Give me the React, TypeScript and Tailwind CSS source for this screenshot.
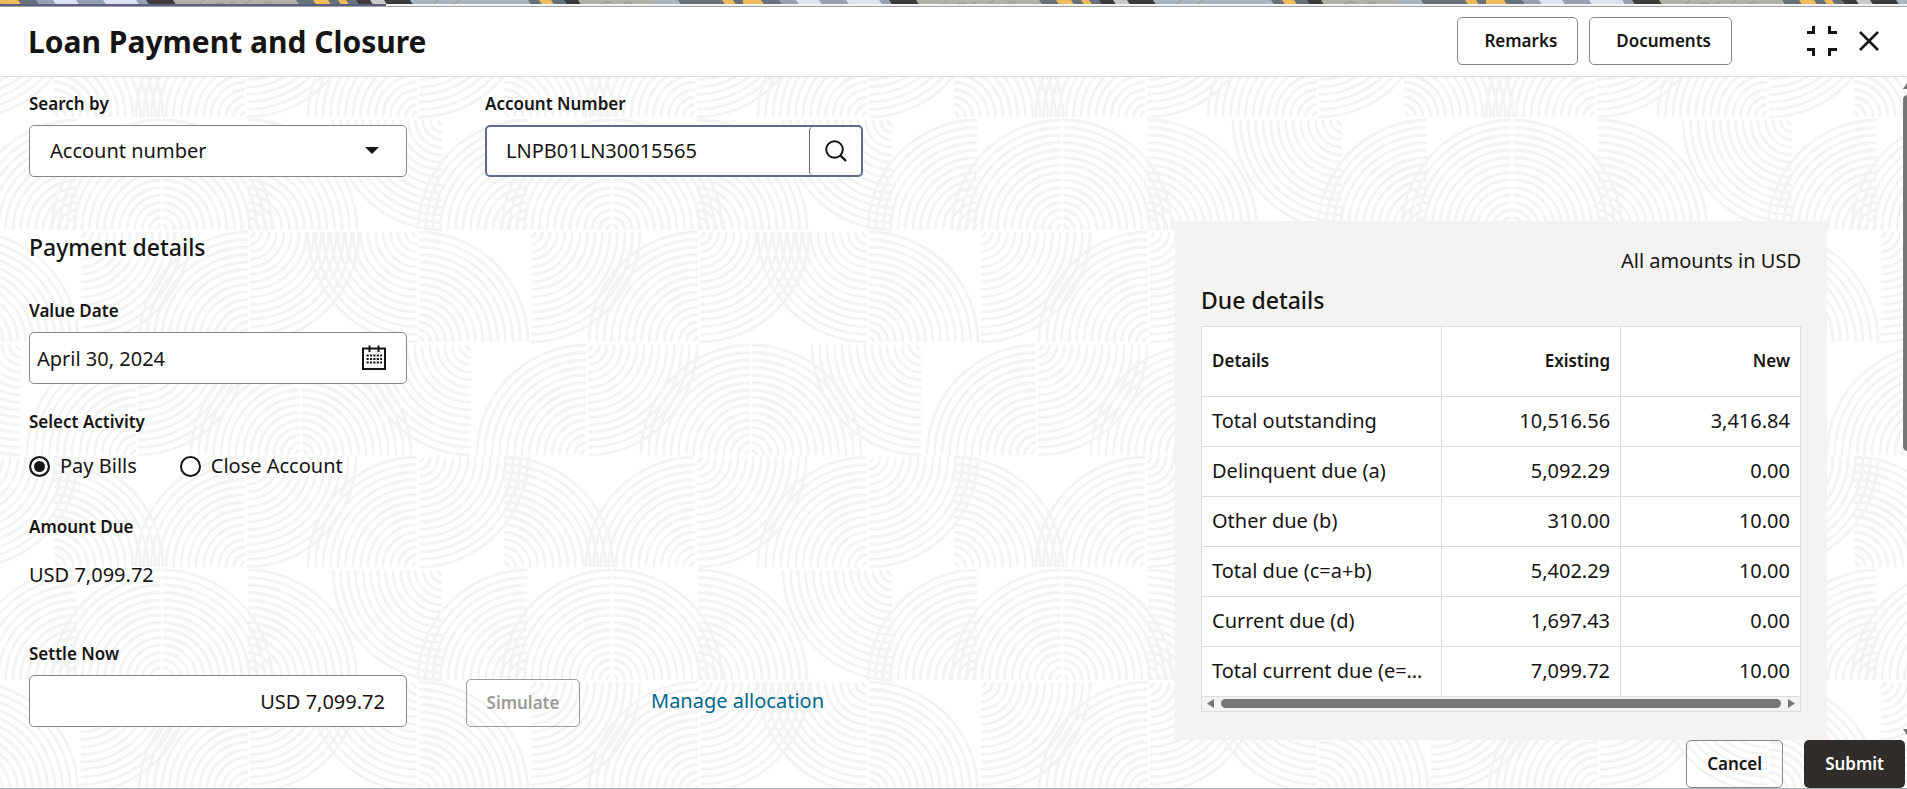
import { useState } from "react";
import clsx from "clsx";

const BAND_COLORS: [number, string][] = [
  [0, "#f0bb5b"], [20, "#66717a"], [38, "#98a1b4"], [55, "#dbe4f0"], [78, "#98a1b4"],
  [105, "#dbe4f0"], [138, "#98a1b4"], [148, "#3f3b3a"], [175, "#b3b0aa"], [298, "#66717a"],
  [315, "#f0bb5b"], [330, "#66717a"], [340, "#f0bb5b"], [348, "#66717a"], [358, "#3f3b3a"],
  [372, "#c9c9c9"], [386, "#3f3b3a"], [412, "#a9b5bf"], [530, "#66717a"], [541, "#f0bb5b"],
  [553, "#66717a"], [566, "#3f3b3a"], [580, "#b3b0aa"], [655, "#a9b5bf"], [680, "#66717a"],
  [724, "#f0bb5b"], [735, "#66717a"],
];

// Quarter discs of the backdrop tile: centre x, row, quadrant
type Quadrant = "LU" | "RU" | "LD" | "RD";
const ARCS: [number, number, Quadrant][] = [
  [418, 0, "LU"], [418, 0, "RD"], [503, 0, "RU"], [696, 0, "LU"], [696, 0, "RD"],
  [443, 1, "LD"], [528, 1, "LU"], [612, 1, "LU"], [612, 1, "RU"], [697, 1, "RU"],
  [418, 2, "LD"], [418, 2, "RU"], [530, 2, "RD"], [699, 2, "LU"], [699, 2, "RD"],
  [301, 3, "LU"], [301, 3, "RU"], [472, 3, "LD"], [587, 3, "LU"], [587, 3, "RD"],
];
const ROW_TOPS = [1, 114, 226, 339];
const RINGS = Array.from({ length: 15 }, (_, i) => 5 + i * 7.5);

function arcPath(cx: number, row: number, q: Quadrant) {
  const up = q[1] === "U";
  const sx = q[0] === "R" ? 1 : -1;
  const cy = ROW_TOPS[row] + (up ? 110 : 0);
  const sweep = (sx === 1) === up ? 0 : 1;
  return RINGS.map(
    (r) => `M${cx + sx * r} ${cy}A${r} ${r} 0 0 ${sweep} ${cx + sx} ${cy + (up ? -r : r)}`
  ).join("");
}

function Backdrop() {
  return (
    <svg className="absolute inset-0 -z-10 h-full w-full" aria-hidden="true">
      <defs>
        <pattern id="waves" x="0" y="6" width="450" height="450" patternUnits="userSpaceOnUse">
          <g fill="none" stroke="#f3f3f3" strokeWidth="2.8">
            {ARCS.map(([cx, row, q], i) => (
              <g key={i}>
                <path d={arcPath(cx, row, q)} />
                <path d={arcPath(cx - 450, row, q)} />
              </g>
            ))}
          </g>
        </pattern>
      </defs>
      <rect width="100%" height="100%" fill="url(#waves)" />
    </svg>
  );
}

function TopBand() {
  return (
    <svg className="block h-[6px] w-full shrink-0" aria-hidden="true">
      <defs>
        <pattern id="band" width="743" height="6" patternUnits="userSpaceOnUse">
          <rect width="743" height="6" fill="#66717a" />
          {BAND_COLORS.map(([x, fill], i) => {
            const end = i + 1 < BAND_COLORS.length ? BAND_COLORS[i + 1][0] : 743;
            return <path key={x} d={`M${x - 2} 0H${end + 1}L${end + 5} 6H${x + 2}Z`} fill={fill} />;
          })}
          <g stroke="#98958f" fill="none">
            <path d="M198 6l6-6M212 6q6-5 12-2M228 6q2-4 6-4M244 5l7-5M262 5q6-5 10-2M432 6l6-6M452 6l8-6M600 5q6-5 12-2M622 5q6-5 10-1" />
          </g>
        </pattern>
      </defs>
      <rect width="100%" height="4" fill="url(#band)" />
      <rect y="4" width="100%" height="2" fill="#f4f4f4" />
      <rect y="4" width="386" height="2" fill="#5b5f86" />
    </svg>
  );
}

const OUTLINE_BUTTON = "h-12 rounded-[5px] border border-[#8a8886] text-[17px] font-semibold";
const FIELD = "h-[52px] w-full rounded-[5px] border border-[#8a8886] bg-white text-xl";
const LABEL = "text-[17px] leading-6 font-semibold";

function Header() {
  return (
    <header className="flex h-[71px] shrink-0 items-center border-t border-b border-t-[#a0a0a0] border-b-[#dedddb] bg-white pr-7 pl-7">
      <h1 className="text-[30px] leading-10 font-bold">Loan Payment and Closure</h1>
      <div className="ml-auto flex items-center gap-[11px] pb-[2px]">
        <button type="button" className={clsx(OUTLINE_BUTTON, "pr-5 pl-[26px]")}>Remarks</button>
        <button type="button" className={clsx(OUTLINE_BUTTON, "pr-5 pl-[26px]")}>Documents</button>
      </div>
      <button type="button" aria-label="Collapse" className="ml-[74px] pb-[2px]">
        <svg width="32" height="32" viewBox="0 0 32 32" fill="none" stroke="#161513" strokeWidth="3">
          <path d="M1 7.500H7.500V1M23.500 1V7.500H31M1 24.500H7.500V31M31 24.500H23.500V31" />
        </svg>
      </button>
      <button type="button" aria-label="Close" className="ml-[21px] pb-[2px]">
        <svg width="20" height="20" viewBox="0 0 20 20" fill="none" stroke="#161513" strokeWidth="2.500">
          <path d="M1 1L19 19M19 1L1 19" />
        </svg>
      </button>
    </header>
  );
}

function CalendarIcon() {
  return (
    <svg width="24" height="26" viewBox="0 0 24 26" fill="none" stroke="#161513" strokeWidth="2">
      <path d="M1 3.500H23V24H1ZM7.500 0.500V7M16.500 0.500V7" />
      <path d="M4.500 10.500H20M4.500 14H20M4.500 17.500H20" strokeWidth="2.200" strokeDasharray="2.200 1.200" />
    </svg>
  );
}

function SearchBar() {
  return (
    <div className="flex gap-[78px]">
      <div className="w-[378px]">
        <label htmlFor="search-by" className={clsx(LABEL, "block")}>Search by</label>
        <div className="relative mt-[9px]">
          <select id="search-by" className={clsx(FIELD, "appearance-none px-5")}>
            <option>Account number</option>
            <option>Customer ID</option>
          </select>
          <svg className="pointer-events-none absolute top-[22px] right-7" width="14" height="7" viewBox="0 0 14 7" aria-hidden="true">
            <path d="M0 0H14L7 7Z" fill="#161513" />
          </svg>
        </div>
      </div>
      <div className="w-[378px]">
        <label htmlFor="account-number" className={clsx(LABEL, "block")}>Account Number</label>
        <div className="mt-[9px] flex h-[52px] rounded-[5px] border-2 border-[#5f6b8f] bg-white">
          <input
            id="account-number"
            defaultValue="LNPB01LN30015565"
            className="min-w-0 flex-1 rounded-l pl-[19px] text-xl outline-none"
          />
          <button type="button" aria-label="Search account" className="flex w-[52px] items-center justify-center rounded border-l border-[#6b6967]">
            <svg width="22" height="22" viewBox="0 0 22 22" fill="none" stroke="#161513" strokeWidth="2">
              <circle cx="9.500" cy="9.500" r="8.300" />
              <path d="M15.300 15.300L21 21" strokeWidth="2.400" />
            </svg>
          </button>
        </div>
      </div>
    </div>
  );
}

function Radio({ label, checked, onChange }: { label: string; checked: boolean; onChange: () => void }) {
  return (
    <label className="flex items-center gap-[10px] text-xl leading-7">
      <input
        type="radio"
        name="activity"
        checked={checked}
        onChange={onChange}
        className="size-[21px] appearance-none rounded-full border-2 border-[#161513] bg-white checked:bg-[#161513] checked:shadow-[inset_0_0_0_3px_white]"
      />
      {label}
    </label>
  );
}

function PaymentForm() {
  const [activity, setActivity] = useState("pay");

  return (
    <section>
      <h2 className="text-[23px] leading-8 font-medium">Payment details</h2>

      <div className="mt-9 w-[378px]">
        <label htmlFor="value-date" className={clsx(LABEL, "block")}>Value Date</label>
        <div className="relative mt-[9px]">
          <input id="value-date" defaultValue="April 30, 2024" className={clsx(FIELD, "px-[7px]")} />
          <button type="button" aria-label="Open calendar" className="absolute top-[13px] right-[21px]">
            <CalendarIcon />
          </button>
        </div>
      </div>

      <fieldset className="mt-[26px]">
        <legend className={LABEL}>Select Activity</legend>
        <div className="mt-[18px] flex gap-[43px]">
          <Radio label="Pay Bills" checked={activity === "pay"} onChange={() => setActivity("pay")} />
          <Radio label="Close Account" checked={activity === "close"} onChange={() => setActivity("close")} />
        </div>
      </fieldset>

      <p className={clsx(LABEL, "mt-[35px]")}>Amount Due</p>
      <p className="mt-[22px] text-xl leading-7">USD 7,099.72</p>

      <label htmlFor="settle-now" className={clsx(LABEL, "mt-[53px] block")}>Settle Now</label>
      <div className="mt-[9px] flex items-end">
        <div className="w-[378px]">
          <input id="settle-now" defaultValue="USD 7,099.72" className={clsx(FIELD, "px-[21px] text-right")} />
        </div>
        <button type="button" disabled className="ml-[59px] h-12 w-[114px] rounded-[5px] border border-[#9d9b99] text-[17px] font-semibold text-[#9d9b99]">
          Simulate
        </button>
        <a href="#allocation" className="mb-[12px] ml-[71px] text-xl leading-7 text-[#00688c]">Manage allocation</a>
      </div>
    </section>
  );
}

const ROWS = [
  ["Total outstanding", "10,516.56", "3,416.84"],
  ["Delinquent due (a)", "5,092.29", "0.00"],
  ["Other due (b)", "310.00", "10.00"],
  ["Total due (c=a+b)", "5,402.29", "10.00"],
  ["Current due (d)", "1,697.43", "0.00"],
  ["Total current due (e=…", "7,099.72", "10.00"],
];

function DueDetails() {
  return (
    <section className="w-[652px] bg-[#f4f3f1] px-[26px] pt-[26px] pb-7">
      <p className="text-right text-xl leading-7">All amounts in USD</p>
      <h2 className="mt-[9px] text-[23px] leading-8 font-medium">Due details</h2>
      <div className="mt-[10px] border border-[#dddcda]">
        <table className="w-full table-fixed border-collapse bg-white text-xl">
          <colgroup>
            <col className="w-[40%]" />
            <col className="w-[30%]" />
            <col className="w-[30%]" />
          </colgroup>
          <thead>
            <tr className="h-[69px] border-b border-[#dddcda] text-[17px]">
              <th className="px-[10px] text-left font-semibold">Details</th>
              <th className="border-x border-[#dddcda] px-[10px] text-right font-semibold">Existing</th>
              <th className="px-[10px] text-right font-semibold">New</th>
            </tr>
          </thead>
          <tbody>
            {ROWS.map(([name, existing, next]) => (
              <tr key={name} className="h-[50px] border-b border-[#dddcda]">
                <td className="px-[10px] whitespace-nowrap">{name}</td>
                <td className="border-x border-[#dddcda] px-[10px] text-right">{existing}</td>
                <td className="px-[10px] text-right">{next}</td>
              </tr>
            ))}
          </tbody>
        </table>
        <div className="flex h-[14px] items-center gap-[7px] px-[5px]">
          <svg width="7" height="9" viewBox="0 0 7 9" aria-hidden="true"><path d="M7 0V9L0 4.500Z" fill="#777" /></svg>
          <div className="h-[9px] flex-1 rounded-full bg-[#777]" />
          <svg width="7" height="9" viewBox="0 0 7 9" aria-hidden="true"><path d="M0 0V9L7 4.500Z" fill="#777" /></svg>
        </div>
      </div>
    </section>
  );
}

export default function App() {
  return (
    <div className="relative isolate flex min-h-screen flex-col overflow-hidden border-b border-[#a9b8bd] bg-white font-['Noto_Sans',sans-serif] text-[#161513]">
      <Backdrop />
      <TopBand />
      <Header />
      <div className="flex flex-1">
        <main className="flex-1 pt-[15px] pl-[29px]">
          <SearchBar />
          <div className="mt-11 flex items-start justify-between pr-[76px]">
            <div className="pt-[10px]">
              <PaymentForm />
            </div>
            <DueDetails />
          </div>
        </main>
        <div className="flex w-1 flex-col justify-between overflow-hidden pt-[5px] pb-[4px]" aria-hidden="true">
          <div className="flex flex-1 flex-col gap-[6px]">
            <svg width="9" height="7" viewBox="0 0 9 7"><path d="M0 7H9L4.500 0Z" fill="#777" /></svg>
            <div className="h-[55%] w-[9px] rounded-full bg-[#777]" />
          </div>
          <svg width="9" height="7" viewBox="0 0 9 7"><path d="M0 0H9L4.500 7Z" fill="#777" /></svg>
        </div>
      </div>
      <footer className="flex shrink-0 justify-end gap-[21px] pr-[2px]">
        <button type="button" className={clsx(OUTLINE_BUTTON, "px-5")}>Cancel</button>
        <button type="button" className="h-12 rounded-[5px] bg-[#312d2a] px-[21px] text-[17px] font-semibold text-white">
          Submit
        </button>
      </footer>
    </div>
  );
}
